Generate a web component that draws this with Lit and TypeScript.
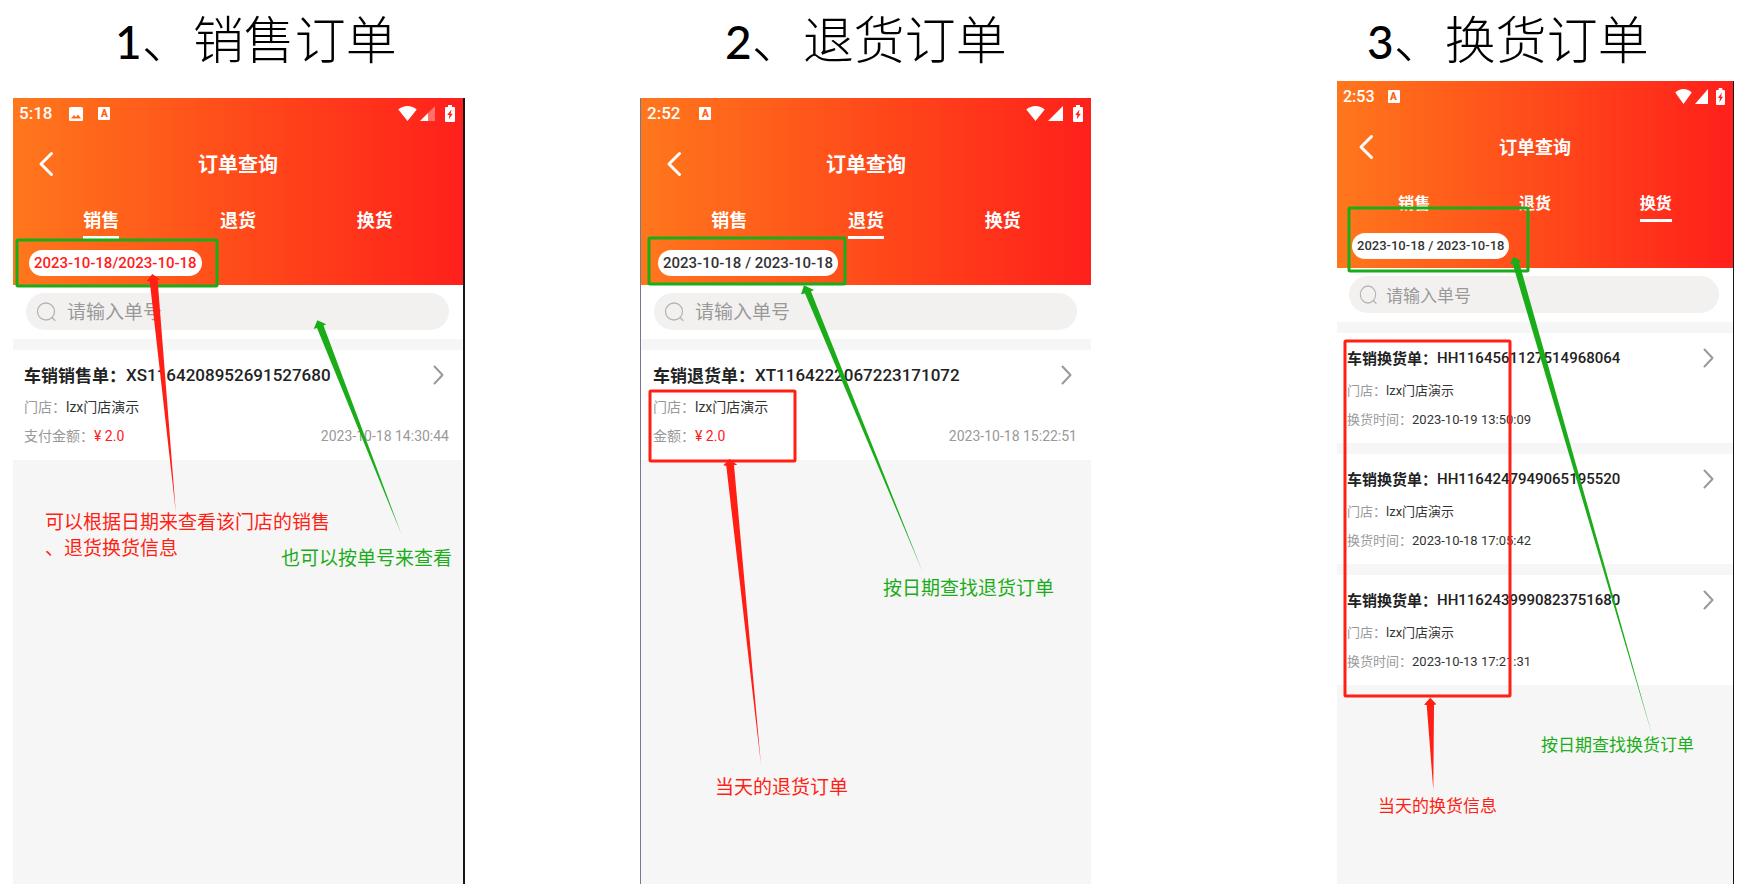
import { LitElement, html, svg, css, nothing } from "lit";
import { customElement, property } from "lit/decorators.js";
import { classMap } from "lit/directives/class-map.js";
import { styleMap } from "lit/directives/style-map.js";

type Tone = "red" | "green";
interface Field { label: string; value: string; tone?: Tone; }
interface Order { kind: string; code: string; fields: Field[]; time?: string; }
interface Box { tone: Tone; x: number; y: number; w: number; h: number; }
interface Arrow { tone: Tone; points: string; }
interface Note { tone: Tone; x: number; y: number; lines: string[]; }
interface Screen {
  id: string;
  number: string;
  heading: string;
  clock: string;
  photo: boolean;
  weakSignal: boolean;
  active: number;
  range: string;
  rangeRed: boolean;
  orders: Order[];
  boxes: Box[];
  arrows: Arrow[];
  notes: Note[];
}

const STORE: Field = { label: "门店：", value: "lzx门店演示" };
const TABS = ["销售", "退货", "换货"];

const SCREENS: Screen[] = [
  {
    id: "sale", number: "1", heading: "、销售订单", clock: "5:18", photo: true, weakSignal: true,
    active: 0, range: "2023-10-18/2023-10-18", rangeRed: true,
    orders: [{
      kind: "车销销售单：", code: "XS1164208952691527680",
      fields: [STORE, { label: "支付金额：", value: "¥ 2.0", tone: "red" }],
      time: "2023-10-18 14:30:44",
    }],
    boxes: [{ tone: "green", x: 4, y: 142, w: 200, h: 46 }],
    arrows: [
      { tone: "red", points: "139.3,176 133.5,183.5 136.7,183 162.8,414 144.6,182 147,181.5" },
      { tone: "green", points: "304.3,222.3 300.7,231 304,230 388.3,436 310.5,227.5 313.3,226.3" },
    ],
    notes: [
      { tone: "red", x: 32, y: 410, lines: ["可以根据日期来查看该门店的销售", "、退货换货信息"] },
      { tone: "green", x: 268, y: 446, lines: ["也可以按单号来查看"] },
    ],
  },
  {
    id: "return", number: "2", heading: "、退货订单", clock: "2:52", photo: false, weakSignal: false,
    active: 1, range: "2023-10-18 / 2023-10-18", rangeRed: false,
    orders: [{
      kind: "车销退货单：", code: "XT1164222067223171072",
      fields: [STORE, { label: "金额：", value: "¥ 2.0", tone: "red" }],
      time: "2023-10-18 15:22:51",
    }],
    boxes: [
      { tone: "green", x: 9, y: 140, w: 196, h: 46 },
      { tone: "red", x: 10, y: 293, w: 145, h: 70 },
    ],
    arrows: [
      { tone: "green", points: "164,187.3 161,196.3 165,195.5 282.7,474 171,193.5 174,192" },
      { tone: "red", points: "89.7,361 83.3,367.3 86.3,368 121,667 94,367 97.3,367" },
    ],
    notes: [
      { tone: "green", x: 243, y: 476, lines: ["按日期查找退货订单"] },
      { tone: "red", x: 75, y: 675, lines: ["当天的退货订单"] },
    ],
  },
  {
    id: "exchange", number: "3", heading: "、换货订单", clock: "2:53", photo: false, weakSignal: false,
    active: 2, range: "2023-10-18 / 2023-10-18", rangeRed: false,
    orders: [
      ["HH1164561127514968064", "2023-10-19 13:50:09"],
      ["HH1164247949065195520", "2023-10-18 17:05:42"],
      ["HH1162439990823751680", "2023-10-13 17:21:31"],
    ].map(([code, at]) => ({
      kind: "车销换货单：", code, fields: [STORE, { label: "换货时间：", value: at }],
    })),
    boxes: [
      { tone: "green", x: 12, y: 127, w: 179, h: 63 },
      { tone: "red", x: 8, y: 260, w: 165, h: 355 },
    ],
    arrows: [
      { tone: "green", points: "176.3,175.7 173,183.3 175.7,183 315.7,656 182,181 184.3,180" },
      { tone: "red", points: "93.3,616.7 87,623.7 89.7,624 96.3,709 97,624 99.3,623.3" },
    ],
    notes: [
      { tone: "green", x: 204, y: 650, lines: ["按日期查找换货订单"] },
      { tone: "red", x: 41, y: 711, lines: ["当天的换货信息"] },
    ],
  },
];

const photoIcon = html`<svg class="photo" viewBox="0 0 14 14" aria-hidden="true">
  <path fill="#fff" fill-rule="evenodd" d="M1.500 0h11A1.500 1.500 0 0 1 14 1.500v11a1.500 1.500 0 0 1-1.500 1.500h-11A1.500 1.500 0 0 1 0 12.500v-11A1.500 1.500 0 0 1 1.500 0zM2 11.500h10L9 7.500 7 10 5 8z"/></svg>`;

const letterIcon = html`<span class="badge" aria-hidden="true">A</span>`;

const wifiIcon = html`<svg class="wifi" viewBox="0 0 20 15" preserveAspectRatio="none" aria-hidden="true">
  <path fill="#fff" d="M.3 3.600C3 1.200 6.400 0 10 0s7 1.200 9.700 3.600L10 15z"/></svg>`;

const signalIcon = (weak: boolean) => html`<svg class="signal" viewBox="0 0 15 15" preserveAspectRatio="none" aria-hidden="true">
  ${weak
    ? svg`<path fill="#fff" fill-opacity=".35" d="M15 0v15H8V7z"/><path fill="#fff" d="M8 7v8H0z"/>`
    : svg`<path fill="#fff" d="M15 0v15H0z"/>`}</svg>`;

const batteryIcon = html`<svg class="battery" viewBox="0 0 10 17" preserveAspectRatio="none" aria-hidden="true">
  <path fill="#fff" fill-rule="evenodd" d="M3 0h4v2h2a1 1 0 0 1 1 1v13a1 1 0 0 1-1 1H1a1 1 0 0 1-1-1V3a1 1 0 0 1 1-1h2zM6.500 4.500 2.200 10h2.200L3.800 14.300 7.800 8.700H5.700z"/></svg>`;

@customElement("order-screen")
export class OrderScreen extends LitElement {
  @property({ attribute: false }) screen!: Screen;

  static styles = css`
    :host {
      --title: 20px; --tab: 18px; --line: 36px; --range: 15px; --hint: 19px;
      --name: 17px; --text: 14px; --note: 19px; --side: 11px; --tabside: 20px; --clock: 17px;
      --apps: 17px; --back: 24px; --wifi: 19px; --signal: 15px; --battery: 10px; --batgap: 7px;
      --glass: 20px; --glassgap: 11px; --search: 13px;
      display: block;
      position: relative;
      flex: 1;
      box-sizing: border-box;
      background: #f6f6f6;
      font-family: Roboto, "Noto Sans CJK SC", sans-serif;
      color: #333;
    }
    :host(.sale) { border-right: 2px solid #15151c; --rangeside: 16px; }
    :host(.return) { border-left: 1px solid #77788c; --rangeside: 17px; --apps: 19px; --side: 12px; }
    :host(.exchange) {
      --title: 18px; --tab: 16px; --line: 32px; --range: 13px; --hint: 17px;
      --name: 15px; --text: 13px; --note: 17px; --side: 10px; --tabside: 17px; --clock: 16px;
      --apps: 13px; --back: 20px; --wifi: 17px; --signal: 13px; --battery: 9px; --batgap: 5px;
      --glass: 18px; --glassgap: 9px; --search: 12px;
      --rangeside: 15px;
      border-right: 1px solid #15151c;
    }
    button { font: inherit; color: inherit; background: none; border: 0; padding: 0; cursor: pointer; }
    svg { display: block; flex: none; }
    .head {
      height: 187px;
      box-sizing: border-box;
      background: linear-gradient(90deg, #ff771c, #ff4b1a 50%, #ff201b);
      color: #fff;
    }
    .status {
      display: flex; align-items: center; height: 31px; padding: 0 8px 0 6px;
      font-size: var(--clock); line-height: 31px; font-weight: 500;
    }
    .apps { display: flex; gap: 15px; padding-left: var(--apps); flex: 1; }
    .photo { width: 14px; height: 14px; }
    .badge {
      width: 12px; height: 13px; border-radius: 1px; background: #fff; color: #ff641a;
      font-size: 10px; line-height: 13px; font-weight: 900; text-align: center;
    }
    .radio { display: flex; align-items: center; gap: 3px; }
    .wifi { width: var(--wifi); height: 15px; }
    .signal { width: var(--signal); height: 15px; }
    .battery { width: var(--battery); height: 17px; margin-left: var(--batgap); }
    .bar { display: grid; grid-template-columns: 60px 1fr 60px; align-items: center; height: 69px; }
    .back { display: grid; place-items: center start; height: 40px; padding-left: var(--back); }
    .bar h2 { margin: 0; padding-top: 3px; font-size: var(--title); line-height: 28px; font-weight: 700; text-align: center; }
    .tabs { display: grid; grid-template-columns: repeat(3, 1fr); padding: 0 var(--tabside); height: 52px; }
    .tab {
      display: flex; flex-direction: column; align-items: center; padding-top: 9px; gap: 1px;
      font-size: var(--tab); line-height: 28px; font-weight: 700;
    }
    .tab.on::after { content: ""; width: var(--line); height: 3px; background: #fff; }
    .range {
      margin-left: var(--rangeside); height: 26px; padding: 0 5px; border-radius: 13px;
      background: #fff; color: #333; font-size: var(--range); line-height: 26px; font-weight: 500;
      white-space: nowrap; display: block;
    }
    .range.hot { color: #ff201b; }
    .search { background: #fff; padding: 8px 14px 9px var(--search); }
    .field {
      display: flex; align-items: center; gap: var(--glassgap); height: 37px; padding: 0 11px 0 10px;
      border-radius: 19px; background: #f3f1f0;
    }
    .glass { width: var(--glass); height: 20px; }
    .field input {
      flex: 1; min-width: 0; border: 0; outline: 0; padding: 2px 0 0; background: none;
      font: 400 var(--hint)/28px Roboto, "Noto Sans CJK SC", sans-serif; color: #333;
    }
    .field input::placeholder { color: #999; opacity: 1; }
    .orders { display: grid; gap: 11px; padding: 11px 0 0; margin: 0; list-style: none; }
    .order { background: #fff; padding: 12px 14px 12px var(--side); height: 86px; }
    .top { display: flex; align-items: center; height: 28px; }
    .top h3 {
      display: flex; flex: 1; margin: 0; font-size: var(--name); line-height: 28px; font-weight: 700; color: #222;
    }
    .code { line-height: 26px; height: 28px; font-weight: 500; }
    .open { padding: 4px 5px 6px; }
    .row { display: flex; font-size: var(--text); line-height: 29px; color: #999; }
    .row:nth-child(2) { padding-top: 3px; }
    .value { color: #333; flex: 1; }
    .value.red { color: #ff201b; }
    .marks { position: absolute; top: 0; left: 0; width: 100%; height: 100%; overflow: visible; pointer-events: none; }
    :host(.return) .marks, :host(.return) .note { margin-left: -1px; }
    .box { fill: none; stroke-width: 3; stroke-linejoin: round; }
    .line-red { stroke: #ff1f14; } .line-green { stroke: #1bad19; }
    .fill-red { fill: #ff1f14; } .fill-green { fill: #1bad19; }
    .note {
      position: absolute; margin: 0; font-size: var(--note); line-height: 26px; white-space: nowrap;
      font-family: "Noto Sans CJK SC", sans-serif;
    }
    .note-red { color: #ff1f14; } .note-green { color: #1bad19; }
  `;

  private order(o: Order) {
    return html`<li class="order">
      <div class="top">
        <h3><span>${o.kind}</span><span class="code">${o.code}</span></h3>
        <button class="open" aria-label="查看订单">
          <svg width="11" height="20" viewBox="0 0 11 20"><path d="M1.500 1.500 9.500 10l-8 8.500" fill="none" stroke="#999" stroke-width="2" stroke-linecap="round" stroke-linejoin="round"/></svg>
        </button>
      </div>
      ${o.fields.map((f, i) => html`<div class="row">
        <span>${f.label}</span><span class=${classMap({ value: true, red: f.tone === "red" })}>${f.value}</span>
        ${o.time && i === o.fields.length - 1 ? html`<time>${o.time}</time>` : nothing}
      </div>`)}
    </li>`;
  }

  render() {
    const s = this.screen;
    return html`
      <header class="head">
        <div class="status">
          <span>${s.clock}</span>
          <span class="apps">${s.photo ? photoIcon : nothing}${letterIcon}</span>
          <span class="radio">${wifiIcon}${signalIcon(s.weakSignal)}${batteryIcon}</span>
        </div>
        <div class="bar">
          <button class="back" aria-label="返回">
            <svg width="18" height="26" viewBox="0 0 18 26"><path d="M14.500 2.500 4 13l10.500 10.500" fill="none" stroke="#fff" stroke-width="3" stroke-linecap="round" stroke-linejoin="round"/></svg>
          </button>
          <h2>订单查询</h2>
        </div>
        <nav class="tabs">
          ${TABS.map((t, i) => html`<button class=${classMap({ tab: true, on: i === s.active })}>${t}</button>`)}
        </nav>
        <button class=${classMap({ range: true, hot: s.rangeRed })}>${s.range}</button>
      </header>
      <div class="search">
        <label class="field">
          <svg class="glass" viewBox="0 0 20 20" preserveAspectRatio="none" aria-hidden="true"><circle cx="10" cy="9.500" r="8.500" fill="none" stroke="#b5b5b5" stroke-width="1.300"/><path d="m16 15.500 3 3" stroke="#b5b5b5" stroke-width="1.300" stroke-linecap="round"/></svg>
          <input type="search" placeholder="请输入单号" aria-label="请输入单号" />
        </label>
      </div>
      <ul class="orders">${s.orders.map((o) => this.order(o))}</ul>
      <svg class="marks" aria-hidden="true">
        ${s.boxes.map((b) => svg`<rect class=${`box line-${b.tone}`} x=${b.x} y=${b.y} width=${b.w} height=${b.h} rx="1"/>`)}
        ${s.arrows.map((a) => svg`<polygon class=${`fill-${a.tone}`} points=${a.points}/>`)}
      </svg>
      ${s.notes.map((n) => html`<p class=${`note note-${n.tone}`} style=${styleMap({ left: `${n.x}px`, top: `${n.y}px` })}>${n.lines.map((l, i) => html`${i ? html`<br />` : nothing}${l}`)}</p>`)}
    `;
  }
}

@customElement("app-root")
export class AppRoot extends LitElement {
  static styles = css`
    :host { display: block; background: #fff; }
    .page {
      display: grid;
      grid-template-columns: 13fr 452fr 175fr 451fr 246fr 397fr 8fr;
      min-height: 100vh;
    }
    .column { display: flex; flex-direction: column; min-width: 0; }
    .sale { grid-column: 2; } .return { grid-column: 4; } .exchange { grid-column: 6; }
    .heading {
      margin: 0; height: 98px; box-sizing: border-box; white-space: nowrap;
      font-family: "Noto Sans CJK SC", sans-serif; font-size: 51px; line-height: 74px; font-weight: 300; color: #000;
    }
    .sale > .heading { padding-left: 102px; }
    .return > .heading { padding-left: 85px; }
    .exchange > .heading { padding-left: 30px; height: 81px; }
    .digit { font-family: Lato, sans-serif; font-size: 46px; font-weight: 500; }
  `;

  render() {
    return html`<main class="page">
      ${SCREENS.map((s) => html`<section class="column ${s.id}">
        <h1 class="heading"><span class="digit">${s.number}</span>${s.heading}</h1>
        <order-screen class=${s.id} .screen=${s}></order-screen>
      </section>`)}
    </main>`;
  }
}
